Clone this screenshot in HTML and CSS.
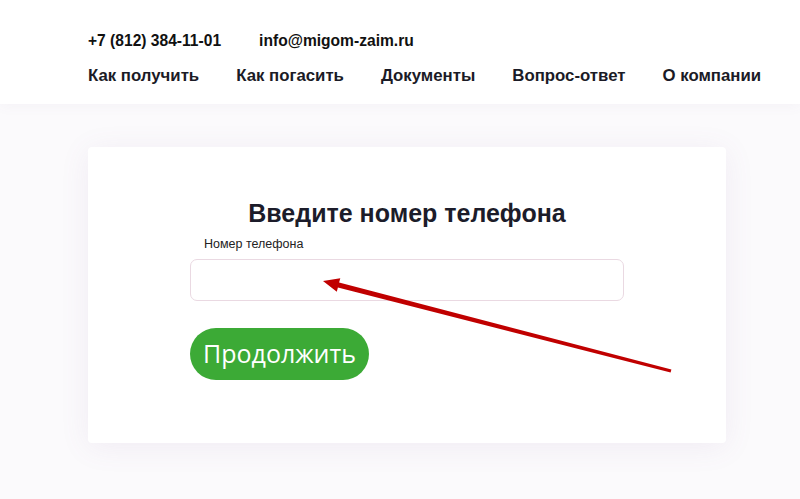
FILE: index.html
```html
<!DOCTYPE html>
<html lang="ru">
<head>
<meta charset="utf-8">
<title>Введите номер телефона</title>
<link rel="stylesheet" href="styles.css">
</head>
<body>
<header class="header">
  <div class="contacts">
    <span class="phone">+7 (812) 384-11-01</span>
    <span class="mail">info@migom-zaim.ru</span>
  </div>
  <nav class="nav">
    <a href="#">Как получить</a>
    <a href="#">Как погасить</a>
    <a href="#">Документы</a>
    <a href="#">Вопрос-ответ</a>
    <a href="#">О компании</a>
  </nav>
</header>
<main class="main">
  <section class="card">
    <h1 class="title">Введите номер телефона</h1>
    <form class="form">
      <label class="label" for="phone">Номер телефона</label>
      <input class="input" id="phone" type="tel">
      <button class="btn" type="button">Продолжить</button>
    </form>
  </section>
</main>
<svg class="arrow" width="800" height="499" viewBox="0 0 800 499" aria-hidden="true">
  <polygon fill="#c00000" points="323,281 340.3,278.2 339.1,282.6 671.4,369.5 670.6,372.5 337.9,287.4 336.8,291.8"/>
</svg>
</body>
</html>
```
FILE: styles.css
```css
* { box-sizing: border-box; }
html, body { margin: 0; padding: 0; }
body {
  background: #fbfafc;
  font-family: "Liberation Sans", Arial, sans-serif;
  color: #1a1a24;
  width: 800px;
  height: 499px;
  overflow: hidden;
  position: relative;
}
.header {
  background: #fff;
  height: 104px;
  padding: 32px 0 0 88px;
  box-shadow: 0 2px 12px rgba(120, 90, 140, 0.05);
  position: relative;
}
.contacts {
  display: flex;
  gap: 38px;
  font-size: 15.6px;
  font-weight: bold;
  line-height: 18px;
  color: #111;
}
.nav {
  display: flex;
  gap: 37px;
  margin-top: 16px;
}
.nav a {
  font-size: 16.8px;
  font-weight: bold;
  line-height: 20px;
  color: #1b1b26;
  text-decoration: none;
}
.main {
  padding: 43px 0 0 88px;
}
.card {
  width: 638px;
  height: 296px;
  background: #fff;
  border-radius: 4px;
  box-shadow: 0 4px 30px rgba(130, 90, 150, 0.09);
  padding-top: 51px;
  display: flex;
  flex-direction: column;
  align-items: center;
}
.title {
  margin: 0;
  font-size: 25px;
  line-height: 30px;
  font-weight: bold;
  color: #1c1c2a;
}
.form {
  width: 434px;
  display: flex;
  flex-direction: column;
  align-items: flex-start;
  margin-top: 9px;
}
.label {
  font-size: 12.5px;
  line-height: 15px;
  color: #222;
  margin-left: 14px;
}
.input {
  margin-top: 7px;
  width: 434px;
  height: 42px;
  border: 1px solid #ead9e2;
  border-radius: 7px;
  background: #fff;
  outline: none;
}
.btn {
  margin-top: 27px;
  width: 179px;
  height: 52px;
  border: none;
  border-radius: 26px;
  background: #3caa36;
  color: #fff;
  font-family: "Open Sans", "Noto Sans", sans-serif;
  font-size: 25px;
  line-height: 30px;
  padding: 0 0 2px;
  cursor: pointer;
}
.arrow {
  position: absolute;
  left: 0;
  top: 0;
  pointer-events: none;
}
```
